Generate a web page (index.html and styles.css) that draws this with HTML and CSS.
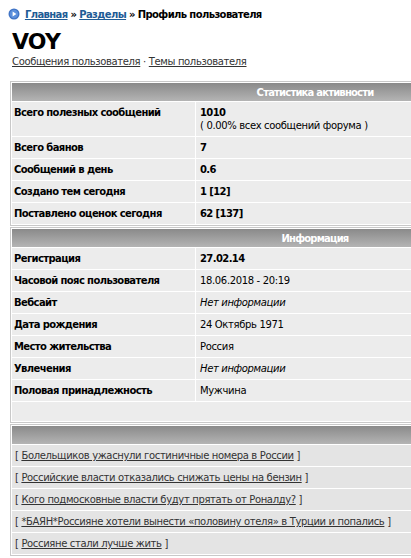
FILE: index.html
```html
<!DOCTYPE html>
<html lang="ru">
	<head>
		<meta charset="UTF-8" />
		<meta name="viewport" content="width=device-width, initial-scale=1.0" />
		<title>Профиль пользователя</title>
		<link rel="stylesheet" href="styles.css">
	</head>
	<body>
		<div class="crumbs">
			<svg class="crumbs-icon" width="12" height="12" viewBox="0 0 12 12">
				<circle cx="6" cy="6" r="5.5" fill="#3f73c4" />
				<circle cx="6" cy="6" r="4.2" fill="#5b8fdc" />
				<path d="M4.6 3.6 L8.4 6 L4.6 8.4 Z" fill="#fff" />
			</svg>
			<a href="#">Главная</a> » <a href="#">Разделы</a> » Профиль пользователя
		</div>

		<h1 class="username">VOY</h1>
		<div class="user-links">
			<a href="#">Сообщения пользователя</a> · <a href="#">Темы пользователя</a>
		</div>

		<table class="profile">
			<colgroup>
				<col class="label-col" />
				<col />
			</colgroup>
			<tr>
				<th colspan="2">Статистика активности</th>
			</tr>
			<tr>
				<td class="label">Всего полезных сообщений</td>
				<td><b>1010</b><br />( 0.00% всех сообщений форума )</td>
			</tr>
			<tr>
				<td class="label">Всего баянов</td>
				<td><b>7</b></td>
			</tr>
			<tr>
				<td class="label">Сообщений в день</td>
				<td><b>0.6</b></td>
			</tr>
			<tr>
				<td class="label">Создано тем сегодня</td>
				<td><b>1 [12]</b></td>
			</tr>
			<tr>
				<td class="label">Поставлено оценок сегодня</td>
				<td><b>62 [137]</b></td>
			</tr>
		</table>

		<table class="profile">
			<colgroup>
				<col class="label-col" />
				<col />
			</colgroup>
			<tr>
				<th colspan="2">Информация</th>
			</tr>
			<tr>
				<td class="label">Регистрация</td>
				<td><b>27.02.14</b></td>
			</tr>
			<tr>
				<td class="label">Часовой пояс пользователя</td>
				<td>18.06.2018 - 20:19</td>
			</tr>
			<tr>
				<td class="label">Вебсайт</td>
				<td><i>Нет информации</i></td>
			</tr>
			<tr>
				<td class="label">Дата рождения</td>
				<td>24 Октябрь 1971</td>
			</tr>
			<tr>
				<td class="label">Место жительства</td>
				<td>Россия</td>
			</tr>
			<tr>
				<td class="label">Увлечения</td>
				<td><i>Нет информации</i></td>
			</tr>
			<tr>
				<td class="label">Половая принадлежность</td>
				<td>Мужчина</td>
			</tr>
			<tr>
				<td class="empty" colspan="2"></td>
			</tr>
		</table>

		<table class="profile news">
			<tr>
				<th></th>
			</tr>
			<tr><td>[ <a href="#">Болельщиков ужаснули гостиничные номера в России</a> ]</td></tr>
			<tr><td>[ <a href="#">Российские власти отказались снижать цены на бензин</a> ]</td></tr>
			<tr><td>[ <a href="#">Кого подмосковные власти будут прятать от Роналду?</a> ]</td></tr>
			<tr><td>[ <a href="#">*БАЯН*Россияне хотели вынести «половину отеля» в Турции и попались</a> ]</td></tr>
			<tr><td>[ <a href="#">Россияне стали лучше жить</a> ]</td></tr>
		</table>
	</body>
</html>
```

FILE: styles.css
```css
html {
	overflow: hidden;
}

body {
	font-family: "DejaVu Sans", Verdana, sans-serif;
	font-size: 10px;
	letter-spacing: -0.35px;
	color: #000;
	margin: 0;
	padding: 8px 0 0 10px;
	background-color: #fff;
}

b {
	letter-spacing: -0.6px;
}

.crumbs {
	font-weight: bold;
	letter-spacing: -0.6px;
	line-height: 12px;
	margin-left: -2px;
}

.crumbs-icon {
	vertical-align: -2px;
	margin-right: 2px;
}

.crumbs a {
	color: #1f5c96;
}

.username {
	font-size: 22px;
	font-weight: bold;
	letter-spacing: -0.8px;
	line-height: 26px;
	margin: 8px 0 0 2px;
}

.user-links {
	margin: 0 0 0 2px;
	line-height: 13px;
	color: #333;
}

.user-links a {
	color: #333;
}

.profile {
	width: 426px;
	border: 1px solid #c9c9c9;
	border-spacing: 1px;
	background-color: #fff;
	margin-top: 13px;
	table-layout: fixed;
}

.profile + .profile {
	margin-top: 1px;
}

.label-col {
	width: 183px;
}

.profile th {
	height: 18px;
	padding: 0 0 0 184px;
	background: linear-gradient(#8a8a8a, #b4b4b4);
	color: #fff;
	letter-spacing: -0.8px;
	font-weight: bold;
	text-align: center;
}

.profile td {
	background-color: #ececec;
	padding: 4px 4px;
	line-height: 13px;
	vertical-align: top;
	white-space: nowrap;
}

.profile td.label {
	padding-left: 2px;
	letter-spacing: -0.6px;
	font-weight: bold;
}

.profile td.empty {
	height: 11px;
}

.news th {
	padding: 0;
}

.news td {
	background-color: #e4e4e4;
	color: #333;
	padding-left: 3px;
}

.news a {
	color: #333;
}
```
